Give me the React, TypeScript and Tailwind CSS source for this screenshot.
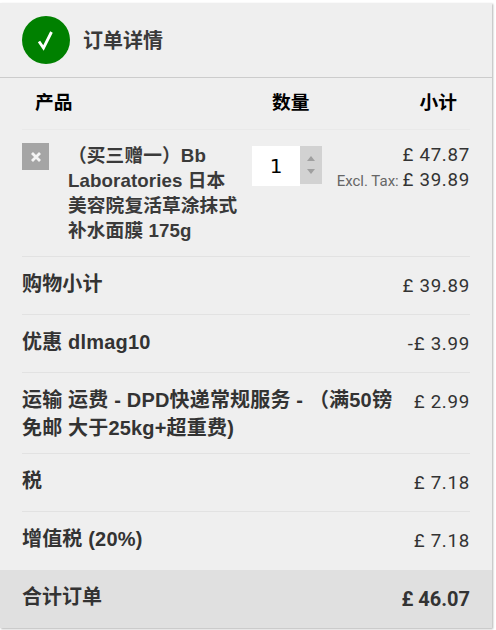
function Row({ label, value, h, border = true }: { label: string; value: string; h: string; border?: boolean }) {
  return (
    <div className={`flex justify-between ${h} ${border ? 'border-b border-[#e2e2e2]' : ''}`}>
      <div className="w-[372px] pt-[13px] text-[20px] leading-[28px] tracking-[0.18px] font-bold text-[#333] font-['Liberation_Sans','Noto_Sans_CJK_SC',sans-serif]">{label}</div>
      <div className="pt-[15px] text-[18.72px] leading-[29px] tracking-[0.72px] text-[#333] font-['Roboto',sans-serif] whitespace-nowrap">{value}</div>
    </div>
  );
}

export default function App() {
  return (
    <div className="w-[496px] h-[630px] bg-white pt-[3px]">
      <div className="w-[492px] h-[625px] bg-[#efefef] shadow-[1px_1px_2px_rgba(0,0,0,0.3)] flex flex-col">
        <div className="flex items-center gap-[13px] h-[75px] px-[22px] border-b border-[#cccccc]">
          <div className="w-12 h-12 rounded-full bg-[#008000] flex items-center justify-center">
            <svg width="20" height="22" viewBox="0 0 20 22" fill="none"><path d="M3 12.5 L7.5 19 L15.5 3" stroke="#fff" strokeWidth="2.8" /></svg>
          </div>
          <div className="mt-[1px] text-[20px] font-bold text-[#3a3a3a] font-['Liberation_Sans','Noto_Sans_CJK_SC',sans-serif]">订单详情</div>
        </div>

        <div className="px-[22px]">
          <div className="flex h-[52px] items-center border-b border-[#e9e9e9] text-[18.72px] font-bold text-black font-['Liberation_Sans','Noto_Sans_CJK_SC',sans-serif]">
            <div className="pl-[13px] w-[250px]">产品</div>
            <div className="w-[80px]">数量</div>
            <div className="flex-1 text-right pr-[13px]">小计</div>
          </div>

          <div className="flex h-[127px] pt-[13px] border-b border-[#e2e2e2]">
            <div className="w-[27px] h-[27px] bg-[#a5a5a5] flex items-center justify-center">
              <svg width="12" height="12" viewBox="0 0 12 12"><path d="M2 2 L10 10 M10 2 L2 10" stroke="#f4f4f4" strokeWidth="2.8" /></svg>
            </div>
            <div className="w-[173px] ml-[19px] text-[18.72px] leading-[25px] tracking-[0.1px] font-bold text-[#3a3a3a] font-['Liberation_Sans','Noto_Sans_CJK_SC',sans-serif]">
              <span>（买三赠一）Bb</span> Laboratories 日本美容院复活草涂抹式补水面膜 175g
            </div>
            <div className="ml-[11px] flex items-start pt-[3px] w-[71px]">
              <div className="w-[48px] h-[40px] bg-white flex items-center justify-center text-[20px] text-black font-['DejaVu_Sans',sans-serif]">1</div>
              <div className="w-[22px] h-[38px] bg-[#d2d2d2] flex flex-col items-center justify-center gap-[8px]">
                <div className="w-0 h-0 border-x-[4px] border-x-transparent border-b-[5px] border-b-[#a0a0a0]" />
                <div className="w-0 h-0 border-x-[4px] border-x-transparent border-t-[5px] border-t-[#a0a0a0]" />
              </div>
            </div>
            <div className="flex-1 text-right text-[18.72px] leading-[25px] tracking-[0.72px] text-[#333] font-['Roboto',sans-serif] whitespace-nowrap">
              <div>£ 47.87</div>
              <div><span className="text-[15px] tracking-normal text-[#666]">Excl. Tax: </span>£ 39.89</div>
            </div>
          </div>

          <Row label="购物小计" value="£ 39.89" h="h-[58px]" />
          <Row label="优惠 dlmag10" value="-£ 3.99" h="h-[58px]" />
          <Row label="运输 运费 - DPD快递常规服务 - （满50镑免邮 大于25kg+超重费)" value="£ 2.99" h="h-[81px]" />
          <Row label="税" value="£ 7.18" h="h-[58px]" />
          <Row label="增值税 (20%)" value="£ 7.18" h="h-[58px]" border={false} />
        </div>

        <div className="flex-1 bg-[#e0e0e0] flex justify-between items-center px-[22px] text-[20px] font-bold text-[#333] font-['Liberation_Sans','Noto_Sans_CJK_SC',sans-serif]">
          <div className="-mt-[5px]">合计订单</div>
          <div className="font-['Roboto',sans-serif]">£ 46.07</div>
        </div>
      </div>
    </div>
  );
}
